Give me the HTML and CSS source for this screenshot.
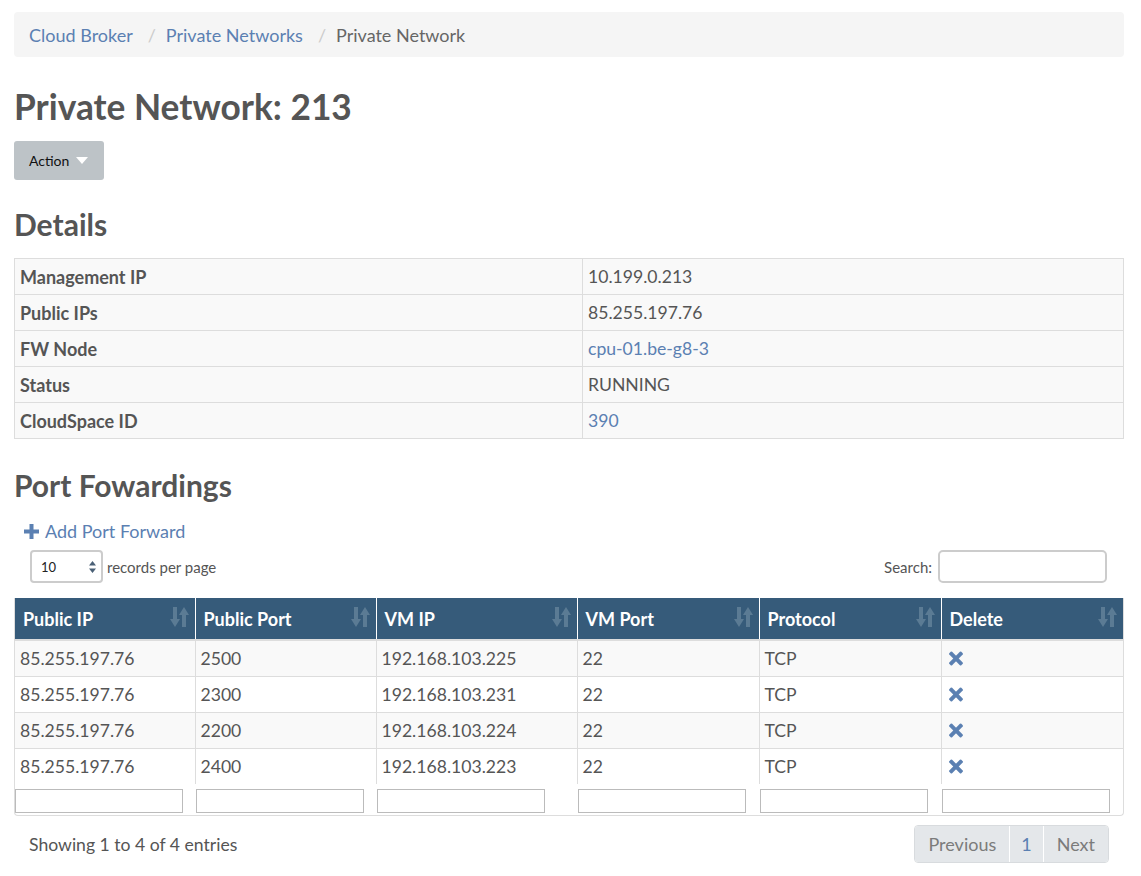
FILE: index.html
```html
<!DOCTYPE html>
<html lang="en">
<head>
<meta charset="utf-8">
<title>Private Network: 213</title>
<link rel="stylesheet" href="styles.css">
</head>
<body>
<div class="page">
  <nav class="breadcrumb">
    <a href="#">Cloud Broker</a><span class="sep">/</span><a href="#">Private Networks</a><span class="sep">/</span><span class="current">Private Network</span>
  </nav>

  <h1 class="title">Private Network: 213</h1>
  <button class="btn-action">Action <span class="caret"></span></button>

  <h2 class="section">Details</h2>
  <table class="details">
    <tr><th>Management IP</th><td>10.199.0.213</td></tr>
    <tr><th>Public IPs</th><td>85.255.197.76</td></tr>
    <tr><th>FW Node</th><td><a href="#">cpu-01.be-g8-3</a></td></tr>
    <tr><th>Status</th><td>RUNNING</td></tr>
    <tr><th>CloudSpace ID</th><td><a href="#">390</a></td></tr>
  </table>

  <h2 class="section section-ports">Port Fowardings</h2>
  <a href="#" class="add-link"><svg class="plus" width="15" height="15" viewBox="0 0 15 15"><path d="M5.5 0h4v5.5H15v4H9.5V15h-4V9.5H0v-4h5.5z" fill="currentColor"/></svg>Add Port Forward</a>

  <div class="controls">
    <label class="length">
      <span class="select"><span>10</span><svg width="7" height="12" viewBox="0 0 7 12"><path d="M3.5 0L7 4.5H0z M3.5 12L0 7.5h7z" fill="#4a6076"/></svg></span>
      records per page
    </label>
    <label class="search">Search: <input type="text"></label>
  </div>

  <div class="table-wrap">
    <table class="ports">
      <thead>
        <tr>
          <th>Public IP<svg class="sort" viewBox="0 0 19 20"><path d="M3 0h4v12h3l-5 8-5-8h3z M12 20h4V8h3l-5-8-5 8h3z"/></svg></th>
          <th>Public Port<svg class="sort" viewBox="0 0 19 20"><path d="M3 0h4v12h3l-5 8-5-8h3z M12 20h4V8h3l-5-8-5 8h3z"/></svg></th>
          <th>VM IP<svg class="sort" viewBox="0 0 19 20"><path d="M3 0h4v12h3l-5 8-5-8h3z M12 20h4V8h3l-5-8-5 8h3z"/></svg></th>
          <th>VM Port<svg class="sort" viewBox="0 0 19 20"><path d="M3 0h4v12h3l-5 8-5-8h3z M12 20h4V8h3l-5-8-5 8h3z"/></svg></th>
          <th>Protocol<svg class="sort" viewBox="0 0 19 20"><path d="M3 0h4v12h3l-5 8-5-8h3z M12 20h4V8h3l-5-8-5 8h3z"/></svg></th>
          <th>Delete<svg class="sort" viewBox="0 0 19 20"><path d="M3 0h4v12h3l-5 8-5-8h3z M12 20h4V8h3l-5-8-5 8h3z"/></svg></th>
        </tr>
      </thead>
      <tbody>
        <tr class="odd"><td>85.255.197.76</td><td>2500</td><td>192.168.103.225</td><td>22</td><td>TCP</td><td><span class="del"></span></td></tr>
        <tr><td>85.255.197.76</td><td>2300</td><td>192.168.103.231</td><td>22</td><td>TCP</td><td><span class="del"></span></td></tr>
        <tr class="odd"><td>85.255.197.76</td><td>2200</td><td>192.168.103.224</td><td>22</td><td>TCP</td><td><span class="del"></span></td></tr>
        <tr><td>85.255.197.76</td><td>2400</td><td>192.168.103.223</td><td>22</td><td>TCP</td><td><span class="del"></span></td></tr>
      </tbody>
      <tfoot>
        <tr>
          <td><input type="text"></td><td><input type="text"></td><td><input type="text"></td>
          <td><input type="text"></td><td><input type="text"></td><td><input type="text"></td>
        </tr>
      </tfoot>
    </table>
  </div>

  <div class="footer">
    <div class="info">Showing 1 to 4 of 4 entries</div>
    <div class="pager">
      <span class="pg">Previous</span><span class="pg active">1</span><span class="pg">Next</span>
    </div>
  </div>
</div>
</body>
</html>
```

FILE: styles.css
```css
* { box-sizing: border-box; }
html, body { margin: 0; padding: 0; background: #fff; }
body {
  font-family: Lato, "Open Sans", "Liberation Sans", sans-serif;
  color: #555;
  font-size: 17.6px;
}
a { color: #5b80b2; text-decoration: none; }

.page { width: 1110px; margin-left: 14px; padding-top: 12px; }

.breadcrumb {
  display: flex;
  align-items: center;
  height: 45px;
  padding-left: 15px;
  background: #f5f5f5;
  border-radius: 4px;
  font-size: 18px;
}
.breadcrumb .sep { color: #ccc; margin: 0 10px 0 15px; }
.breadcrumb .current { color: #666; }

.title {
  margin: 30px 0 0;
  font-size: 35.3px;
  font-weight: 700;
  line-height: 40px;
  color: #555;
}

.btn-action {
  margin-top: 14px;
  display: flex;
  align-items: center;
  height: 39px;
  width: 90px;
  padding: 0 0 0 15px;
  border: none;
  border-radius: 3px;
  background: #bdc3c7;
  color: #111;
  font-family: Lato, sans-serif;
  font-size: 14px;
}
.caret {
  margin-left: 7px;
  width: 0; height: 0;
  border-left: 6px solid transparent;
  border-right: 6px solid transparent;
  border-top: 7px solid #fff;
}

.section {
  margin: 27px 0 0;
  font-size: 30px;
  font-weight: 700;
  line-height: 34px;
  color: #555;
}

.details {
  margin-top: 17px;
  width: 100%;
  border-collapse: collapse;
  border: 1px solid #ddd;
  background: #f9f9f9;
}
.details th, .details td {
  height: 36px;
  padding: 0 5px;
  border: 1px solid #ddd;
  text-align: left;
  font-size: 17.6px;
}
.details th { width: 568px; font-weight: 700; font-size: 18px; }
.details td { font-weight: 400; }

.section-ports { margin-top: 29px; }

.add-link {
  display: inline-flex;
  align-items: center;
  margin: 17px 0 0 10px;
  font-size: 18px;
  line-height: 24px;
}
.plus { margin-right: 6px; }

.controls {
  display: flex;
  justify-content: space-between;
  align-items: center;
  margin-top: 7px;
  height: 33px;
}
.length {
  display: flex;
  align-items: center;
  margin-left: 16px;
  font-size: 15px;
  color: #555;
}
.select {
  display: flex;
  align-items: center;
  justify-content: space-between;
  width: 73px;
  height: 33px;
  padding: 0 5px 0 9px;
  margin-right: 4px;
  border: 2px solid #ccc;
  border-radius: 4px;
  background: #fff;
  color: #222;
  font-size: 13px;
}
.search {
  display: flex;
  align-items: center;
  margin-right: 17px;
  font-size: 15px;
}
.search input {
  margin-left: 6px;
  width: 169px;
  height: 33px;
  border: 2px solid #ccc;
  border-radius: 5px;
}

.table-wrap {
  margin-top: 15px;
  border: 1px solid #ddd;
  border-top: none;
  border-radius: 0 0 4px 4px;
  overflow: hidden;
}
.ports {
  width: 100%;
  border-collapse: collapse;
  table-layout: fixed;
}
.ports th {
  position: relative;
  height: 42px;
  padding: 0 8px;
  background: #365b7a;
  color: #fff;
  text-align: left;
  font-weight: 700;
  font-size: 18px;
  border-left: 1px solid #fff;
  border-bottom: 2px solid #ddd;
}
.ports th:first-child { border-left: none; width: 180px; }
.ports th:nth-child(2) { width: 181px; }
.ports th:nth-child(3) { width: 201px; }
.ports th:nth-child(4) { width: 182px; }
.ports th:nth-child(5) { width: 182px; }
.sort {
  position: absolute;
  right: 6px;
  top: 9px;
  width: 19px;
  height: 20px;
  fill: #5b7b94;
}

.ports td {
  height: 36px;
  padding: 0 5px;
  border-left: 1px solid #ddd;
  border-top: 1px solid #ddd;
  font-size: 17.6px;
}
.ports tbody td:first-child { border-left: none; }
.ports tbody tr.odd td { background: #f9f9f9; }
.ports tfoot td {
  height: 31px;
  padding: 2px 0 0 1px;
  border: none;
  vertical-align: middle;
}
.ports tfoot td:first-child { padding-left: 0; }
.ports tfoot input {
  display: block;
  width: 168px;
  height: 24px;
  border: 1px solid #bbb;
  border-radius: 0;
}
.del {
  display: inline-block;
  position: relative;
  width: 15px; height: 15px;
  margin-left: 2px;
  vertical-align: -1px;
}
.del::before, .del::after {
  content: "";
  position: absolute;
  left: 5.5px; top: -1px;
  width: 4px; height: 17px;
  background: #5b80b2;
  border-radius: 1px;
}
.del::before { transform: rotate(45deg); }
.del::after { transform: rotate(-45deg); }

.footer {
  display: flex;
  justify-content: space-between;
  align-items: center;
  margin-top: 9px;
}
.info { margin-left: 15px; font-size: 17.6px; }
.pager {
  display: flex;
  margin-right: 15px;
  border: 1px solid #d8dbde;
  border-radius: 4px;
  overflow: hidden;
}
.pg {
  display: flex;
  align-items: center;
  height: 36px;
  padding: 0 13px;
  background: #e4e7ea;
  color: #7b7b7b;
  font-size: 18px;
  border-left: 1px solid #fff;
}
.pg:first-child { border-left: none; }
.pg.active { color: #5b80b2; padding: 0 11px; }
```
